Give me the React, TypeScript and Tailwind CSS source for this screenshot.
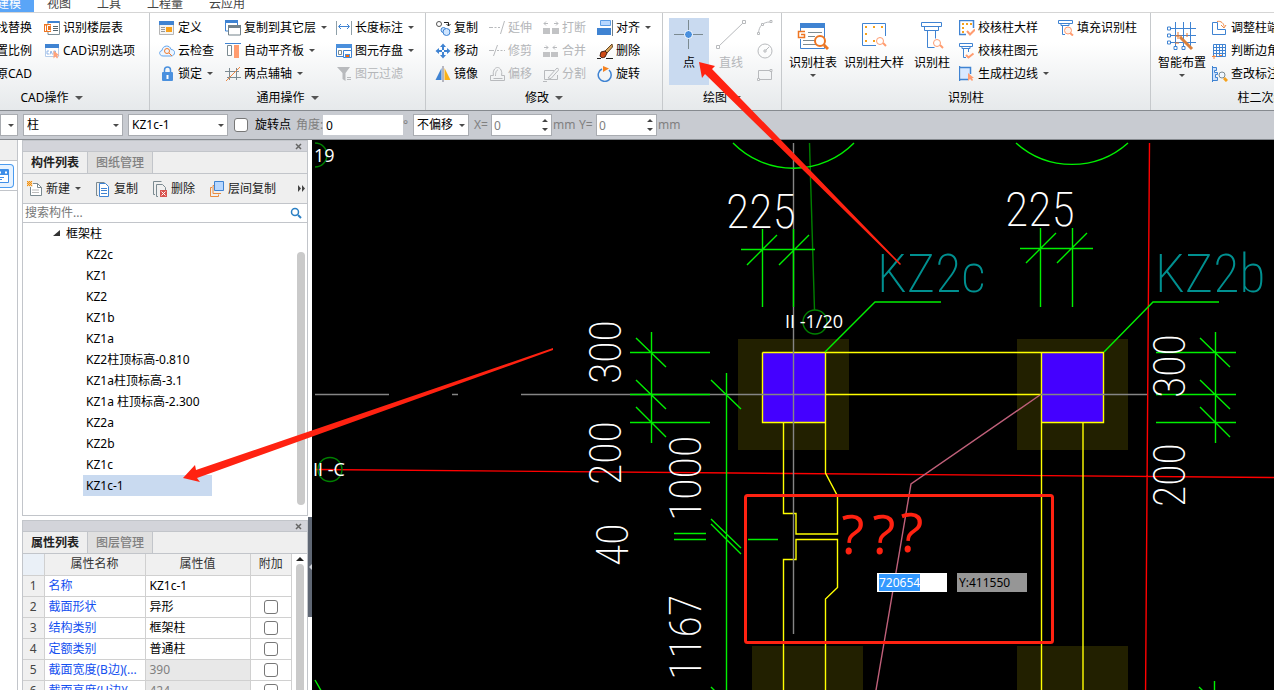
import { useEffect, useRef, type ReactNode } from "react";

function Icon({ children, size = 16, dim }: { children: ReactNode; size?: number; dim?: boolean }) {
    return (
        <svg
            aria-hidden="true"
            width={size}
            height={size}
            viewBox={`0 0 ${size} ${size}`}
            fill="none"
            stroke={dim ? "#b8babd" : "#3f83d2"}
            className="shrink-0"
        >
            {children}
        </svg>
    );
}

function Caret() {
    return <span className="block h-0 w-0 shrink-0 border-x-3 border-t-3 border-x-transparent border-t-[#4a4a4a]" />;
}

const icons: Record<string, ReactNode> = {
    floorTable: (
        <Icon>
            <path d="M4 1.500h11.500v13H4z" fill="#fff" stroke="#7f9097" />
            <path d="M3.500 1h12v2h-12z" fill="#3f83d2" stroke="none" />
            <path d="M9 6.500h5M9 8.500h5M9 10.500h5" stroke="#55666e" />
            <path d="M0 4h7v8H0z" fill="#ee7623" stroke="none" />
            <path d="M1.500 5.500V11M6.500 5.500h-3v5h3" stroke="#fff" />
        </Icon>
    ),
    cadOptions: (
        <Icon>
            <path d="M1.500 2.500h13v11h-13z" fill="#fff" stroke="#b7cdea" />
            <path d="M1 1h14v4H1z" fill="#3f83d2" stroke="none" />
            <path d="M5 8H3v3h2M6 11.500L7 8l1.500 3.500M10 8v3.500h1.500V8z" stroke="#8fb5e8" />
            <path d="M9.500 7.500v8l2-2 1.500 2 1-1-1-2h2.500z" fill="#ffa27a" stroke="none" />
        </Icon>
    ),
    define: (
        <Icon>
            <path d="M.5 2.500h14v12H.5z" fill="#f4f4f4" stroke="#b5b5b5" />
            <path d="M0 1h15v4H0z" fill="#3f83d2" stroke="none" />
            <path d="M2 7.500h4M2 9.500h4M2 11.500h4" stroke="#999" />
            <path d="M7 7h6v5H7z" fill="#f7a11b" stroke="none" />
        </Icon>
    ),
    cloud: (
        <Icon>
            <path d="M4 13C0 13-.5 8 3 7.500 3.500 2 11 1.500 12 6.500c5 0 4.500 6.500 0 6.500H4z" fill="#eef6ff" stroke="#62a4ec" />
            <circle cx="8" cy="8" r="2.500" stroke="#f07a2d" />
            <path d="M10 10l3 3" stroke="#f07a2d" />
        </Icon>
    ),
    lock: (
        <Icon>
            <path d="M5.500 6V4a3 3 0 0 1 6 0v2" stroke="#4a90de" strokeWidth="1.500" />
            <rect x="3" y="6" width="11" height="9" rx="1" fill="#4a90de" stroke="none" />
            <path d="M8.500 9v4" stroke="#fff" strokeWidth="2" />
        </Icon>
    ),
    copyLayer: (
        <Icon>
            <path d="M.5 1h12v10H.5z" fill="#fff" stroke="#3f83d2" />
            <path d="M0 0h13v3H0z" fill="#3f83d2" stroke="none" />
            <path d="M3.500 6h12v9h-12z" fill="#fff" stroke="#73828a" />
            <path d="M3 5h13v3H3z" fill="#73828a" stroke="none" />
        </Icon>
    ),
    slab: (
        <Icon>
            <path d="M0 .5h16" />
            <path d="M2.500 2.500h4v10h-4z" fill="#fff" stroke="#7b8a91" />
            <path d="M9 2h5v13H9z" fill="#ff9c70" stroke="none" />
        </Icon>
    ),
    auxAxis: (
        <Icon>
            <path d="M4.500 2v12M11.500 2v12M0 5.500h14M2 11.500h14" stroke="#7b8a91" />
            <path d="M1 15L15 1" stroke="#ee8844" />
        </Icon>
    ),
    dimension: (
        <Icon>
            <path d="M.5 1v14M15.500 1v14" stroke="#8fa0a8" />
            <path d="M3 6.500h10M5 4L2.500 6.500 5 9M11 4l2.500 2.500L11 9" />
        </Icon>
    ),
    save: (
        <Icon>
            <path d="M.5 1.500h15v12H.5z" fill="#fff" />
            <path d="M0 1h16v4H0z" fill="#4a8fdc" stroke="none" />
            <path d="M2.500 7.500h3v4h-3z" stroke="#7b8a91" />
            <path d="M7.500 7.500h8v7h-8z" fill="#fff" />
            <path d="M9 11h5v4H9z" fill="#4a8fdc" stroke="none" />
            <path d="M10 12h3v2h-3z" fill="#f60" stroke="none" />
        </Icon>
    ),
    filter: (
        <Icon dim>
            <path d="M1 1h13L9.500 7v8l-3-2V7z" fill="#b8babd" stroke="none" />
            <path d="M11 11.500h4M11 13.500h4" />
        </Icon>
    ),
    copy: (
        <Icon>
            <circle cx="4" cy="4" r="2.500" stroke="#555" />
            <path d="M9 2.500h4.500V6M11.500 4l2 2 2-2" stroke="#222" />
            <circle cx="8.500" cy="10" r="2.500" fill="#cfe5ff" />
            <circle cx="11.500" cy="12" r="3.500" fill="#cfe5ff" />
        </Icon>
    ),
    move: (
        <Icon>
            <path d="M8 3v4M8 9v4M3 8h4M9 8h4" strokeWidth="2" />
            <path d="M5 4l3-3.500L11 4zM5 12l3 3.500 3-3.500zM4 5L.5 8 4 11zM12 5l3.500 3L12 11z" fill="#3f83d2" stroke="none" />
        </Icon>
    ),
    mirror: (
        <Icon>
            <path d="M6.500 2v12H.5z" fill="#3f83d2" stroke="none" />
            <path d="M9.500 2v12h6z" fill="#fbb116" stroke="none" />
            <path d="M8 0v16" stroke="#778" />
        </Icon>
    ),
    extend: (
        <Icon dim>
            <path d="M0 7.500h4M5.500 7.500h2M9 7.500h2M11.500 14l4-13" />
        </Icon>
    ),
    trim: (
        <Icon dim>
            <path d="M0 7.500h5M8 7.500h2M11.500 7.500h2M15 7.500h1M4.500 13l4-11" />
        </Icon>
    ),
    offset: (
        <Icon dim>
            <path d="M1.500 14.500v-5h3c-1-4 1-8 4-8s5 4 4 8h3v5z" />
            <path d="M4.500 12.500h9M6.500 10c0-4 1-6 2.500-6" />
        </Icon>
    ),
    breakIcon: (
        <Icon dim>
            <path d="M0 8h7v6H0zM9 8h7v6H9z" fill="#c2c3c5" stroke="none" />
            <path d="M1 3.500h4M3 1.500l-2 2 2 2M11 3.500h4M13 1.500l2 2-2 2" />
        </Icon>
    ),
    merge: (
        <Icon dim>
            <path d="M0 9h7v5H0zM8 9h7v5H8z" fill="#c2c3c5" stroke="none" />
            <path d="M1 4.500h4M3 2.500l2 2-2 2M10 4.500h4M12 2.500l-2 2 2 2" />
        </Icon>
    ),
    split: (
        <Icon dim>
            <path d="M11 4.500H1.500v9h13V9M0 15.500h4M5 12l9-10 2 1.500-8 9z" />
        </Icon>
    ),
    align: (
        <Icon>
            <path d="M3.500.5h10v5h-10z" fill="#b7d7ff" stroke="#5c9de6" />
            <path d="M0 8h14v7H0z" fill="#3f83d2" stroke="none" />
            <path d="M15.500 0v16" stroke="#70808a" />
        </Icon>
    ),
    erase: (
        <Icon>
            <path d="M15 1L8 8l2 2 5.500-6z" fill="#d9a55c" stroke="#654521" />
            <path d="M4 9l4-1 2 2-2 4c-2 1-4 1-5-1z" fill="#cf4b17" stroke="#472314" />
            <path d="M0 15.500h4M9 15.500h7" stroke="#222" />
        </Icon>
    ),
    rotate: (
        <Icon>
            <path d="M5 3a6.500 6.500 0 1 0 7 1" strokeWidth="1.500" />
            <path d="M6 0l6 2.500L6 6z" fill="#f58220" stroke="none" />
        </Icon>
    ),
    checkDetail: (
        <Icon>
            <path d="M7 14.500H.5V.5h14V8" strokeWidth="1.500" />
            <path d="M3 3h2v2H3zM7 3h2v2H7zM11 3h2v2h-2zM3 7h2v2H3zM3 11h2v2H3z" fill="#f5a11b" stroke="none" />
            <path d="M8 11l3 3.500 5-5" stroke="#ff9c70" strokeWidth="2" />
        </Icon>
    ),
    checkColumn: (
        <Icon>
            <path d="M.5.500h13v3H.5zM3 3.500v2h8v-2M4.500 5.500v9H7M9.500 5.500V9" />
            <path d="M7 12l2.500 2.500 5-4" stroke="#ff9c70" strokeWidth="2" />
        </Icon>
    ),
    edgeLine: (
        <Icon>
            <path d="M2 2h9v11H2z" fill="#d8e8ff" stroke="none" />
            <path d="M.5 0v15M0 1.500h11.500V8M0 13.500h9" strokeWidth="1.500" />
            <path d="M9 7v8l2-2 2 2 1-1-1-2h2z" fill="#ff9c70" stroke="none" />
        </Icon>
    ),
    fillColumn: (
        <Icon>
            <path d="M.5.500h14v3H.5zM3 3.500v2h8v-2M4.500 5.500v9H7" />
            <circle cx="10" cy="10.500" r="3.500" fill="#fff3ec" stroke="#ff9c70" />
            <path d="M12 13l3 2.500" stroke="#ff9c70" strokeWidth="2" />
        </Icon>
    ),
    adjustEnd: (
        <Icon>
            <path d="M.5 2.500h5v7h8v5H.5z" />
            <path d="M5 1.500c4-1 7 2 7 5M9 5l3 3 2-3" stroke="#ee8844" />
        </Icon>
    ),
    judge: (
        <Icon>
            <path d="M1.500 1.500h12v12h-12zM1.500 4.500h12M1.500 7.500h12M1.500 10.500h12M4.500 1.500v12M7.500 1.500v12M10.500 1.500v12" />
            <path d="M0 13.500h4M2 12v4M7 12.500h3" stroke="#ee8844" />
        </Icon>
    ),
    checkMark: (
        <Icon>
            <path d="M.5 0v16M.5 1.500h4v3h-2v2h3v2h-2v3h2v3h-5" fill="#cce0fb" />
            <circle cx="10" cy="9" r="3" fill="#eef6ff" stroke="#7b8a91" />
            <path d="M12 12l3 3" stroke="#f5a11b" strokeWidth="3" />
        </Icon>
    ),
    arc: (
        <Icon dim>
            <path d="M1.500 13C2 6 6 2 13 2" />
            <path d="M.5 12.500h2v2h-2zM4.500 3.500h2v2h-2zM13 .5h2v2h-2z" fill="#fff" />
        </Icon>
    ),
    circle: (
        <Icon dim>
            <circle cx="8" cy="8" r="7" />
            <path d="M7 7h2v2H7zM9 7l3-3" />
        </Icon>
    ),
    rect: (
        <Icon dim>
            <path d="M1.500 4.500h13v9h-13z" />
            <path d="M.5 12.500h2v2h-2zM13 3.500h2v2h-2z" fill="#fff" />
        </Icon>
    ),
    newFile: (
        <Icon>
            <path d="M3.500 2.500h7l4 4v8h-11z" fill="#fff" stroke="#7b8a91" />
            <path d="M10.500 2.500v4h4" stroke="#7b8a91" />
            <path d="M5 9h7M5 11.500h7" stroke="#bbb" />
            <path d="M0 0h6v6H0z" fill="#efefef" stroke="none" />
            <path d="M0 0h1v1H0zM2 0h1v1H2zM4 0h1v1H4zM1 1h1v1H1zM3 1h1v1H3zM0 2h1v1H0zM2 2h1v1H2zM4 2h1v1H4zM1 3h1v1H1zM3 3h1v1H3zM0 4h1v1H0zM2 4h1v1H2zM4 4h1v1H4z" fill="#f08c00" stroke="#f79a1d" strokeWidth=".3" />
        </Icon>
    ),
    copyDoc: (
        <Icon>
            <path d="M3 14.500H1.500v-13h8" stroke="#7b8a91" />
            <path d="M4.500 2.500h6l3 3v10h-9z" fill="#fff" />
            <path d="M6 7.500h6M6 9.500h6M6 12.500h6" />
        </Icon>
    ),
    deleteDoc: (
        <Icon>
            <path d="M3 13.500H1.500v-13h8M6 15.500H4.500v-12h6l3 3V9" stroke="#7b8a91" />
            <path d="M8 9h7v7H8z" fill="#d9534f" stroke="none" />
            <path d="M9.500 10.500l4 4M13.500 10.500l-4 4" stroke="#fff" />
        </Icon>
    ),
    layerCopy: (
        <Icon>
            <path d="M3 6.500H1.500v9h8v-2M5 4.500h-1v8h8" stroke="#e98b3f" />
            <path d="M5.500.5h9v9h-9z" fill="#b7d7ff" />
        </Icon>
    ),
};

function Tool({ icon, label, caret, disabled }: { icon: string; label: string; caret?: boolean; disabled?: boolean }) {
    return (
        <button type="button" disabled={disabled} className="flex items-center gap-[3px] whitespace-nowrap disabled:text-[#b4b6b9]">
            {icons[icon]}
            <span>{label}</span>
            {caret && <span className="ml-[2px]"><Caret /></span>}
        </button>
    );
}

function Group({ title, caret, className, children }: { title: string; caret?: boolean; className: string; children: ReactNode }) {
    return (
        <section className={`flex shrink-0 flex-col border-r border-[#c6c9cc] pt-[3px] ${className}`}>
            <div className="flex h-[69px]">{children}</div>
            <h2 className="flex flex-1 items-center justify-center gap-[6px] pt-px whitespace-nowrap">
                {title}
                {caret && <span className="block h-0 w-0 border-x-4 border-t-4 border-x-transparent border-t-[#555]" />}
            </h2>
        </section>
    );
}

function BigTool({ label, caret, className, children }: { label: string; caret?: boolean; className: string; children: ReactNode }) {
    return (
        <button type="button" className={`flex h-[67px] shrink-0 flex-col items-center whitespace-nowrap ${className}`}>
            <svg aria-hidden="true" width="32" height="36" viewBox="0 0 32 36" fill="none" stroke="#3f83d2" className="shrink-0">
                {children}
            </svg>
            <span className="leading-[18px]">{label}</span>
            {caret && <span className="mt-[2px]"><Caret /></span>}
        </button>
    );
}

function Ribbon() {
    const column = "grid shrink-0 grid-rows-3";
    return (
        <div className="flex h-[98px] overflow-hidden border-b border-[#868a8f] bg-gradient-to-b from-white from-30% to-[#e6e9eb]">
            <Group title="CAD操作" caret className="-ml-[46px] w-[196px]">
                <div className={`${column} w-[78px] justify-end`}>
                    <button type="button" className="whitespace-nowrap">查找替换</button>
                    <button type="button" className="whitespace-nowrap">设置比例</button>
                    <button type="button" className="whitespace-nowrap">还原CAD</button>
                </div>
                <div className={`${column} pl-3`}>
                    <Tool icon="floorTable" label="识别楼层表" />
                    <Tool icon="cadOptions" label="CAD识别选项" />
                </div>
            </Group>
            <Group title="通用操作" caret className="w-[276px]">
                <div className={`${column} w-[75px] pl-[9px]`}>
                    <Tool icon="define" label="定义" />
                    <Tool icon="cloud" label="云检查" />
                    <Tool icon="lock" label="锁定" caret />
                </div>
                <div className={`${column} w-[111px]`}>
                    <Tool icon="copyLayer" label="复制到其它层" caret />
                    <Tool icon="slab" label="自动平齐板" caret />
                    <Tool icon="auxAxis" label="两点辅轴" caret />
                </div>
                <div className={column}>
                    <Tool icon="dimension" label="长度标注" caret />
                    <Tool icon="save" label="图元存盘" caret />
                    <Tool icon="filter" label="图元过滤" disabled />
                </div>
            </Group>
            <Group title="修改" caret className="w-[237px]">
                <div className={`${column} w-[63px] pl-[9px]`}>
                    <Tool icon="copy" label="复制" />
                    <Tool icon="move" label="移动" />
                    <Tool icon="mirror" label="镜像" />
                </div>
                <div className={`${column} w-[54px]`}>
                    <Tool icon="extend" label="延伸" disabled />
                    <Tool icon="trim" label="修剪" disabled />
                    <Tool icon="offset" label="偏移" disabled />
                </div>
                <div className={`${column} w-[54px]`}>
                    <Tool icon="breakIcon" label="打断" disabled />
                    <Tool icon="merge" label="合并" disabled />
                    <Tool icon="split" label="分割" disabled />
                </div>
                <div className={column}>
                    <Tool icon="align" label="对齐" caret />
                    <Tool icon="erase" label="删除" />
                    <Tool icon="rotate" label="旋转" />
                </div>
            </Group>
            <Group title="绘图" caret className="w-[119px]">
                <BigTool label="点" className="ml-[6px] mt-[2px] w-10 bg-[#c9daf0]">
                    <path d="M15.500 2v10M15.500 21v10M1 16.500h10M20 16.500h10" stroke="#7b8a91" />
                    <circle cx="15.500" cy="16.500" r="4" fill="#4a90de" stroke="#fff" />
                </BigTool>
                <BigTool label="直线" className="mt-[2px] w-11 text-[#b4b6b9]">
                    <path d="M4 28L28 5" stroke="#b8babd" />
                    <path d="M1.500 27.500h3v3h-3zM27.500 2.500h3v3h-3z" fill="#fff" stroke="#b8babd" />
                </BigTool>
                <div className={`${column} w-5 justify-items-end`}>
                    <button type="button" aria-label="弧">{icons.arc}</button>
                    <button type="button" aria-label="圆">{icons.circle}</button>
                    <button type="button" aria-label="矩形">{icons.rect}</button>
                </div>
            </Group>
            <Group title="识别柱" className="w-[369px]">
                <BigTool label="识别柱表" caret className="ml-1 mt-[2px] w-[54px]">
                    <path d="M3.500 6.500h24v24h-24z" fill="#fff" />
                    <path d="M3 5h25v5H3z" fill="#3f83d2" stroke="none" />
                    <path d="M11 14.500h14M11 18.500h7M6 22.500h12M6 26.500h13" stroke="#7b8a91" />
                    <path d="M1 13h8v8H1z" fill="#fff" stroke="none" />
                    <path d="M8 13.500H1.500v6h6v-3H4" stroke="#ee7623" strokeWidth="1.500" />
                    <circle cx="23" cy="23" r="5" fill="#fff" stroke="#ee7623" strokeWidth="2" />
                    <path d="M27 27l4 4" stroke="#ee7623" strokeWidth="3" />
                </BigTool>
                <BigTool label="识别柱大样" className="mt-[2px] w-[68px]">
                    <path d="M18 27.500H4.500v-22h23V18" />
                    <path d="M7 8h2v2H7zM15 8h2v2h-2zM23 8h2v2h-2zM7 15h2v2H7zM7 22h2v2H7zM15 22h2v2h-2z" fill="#f5a11b" stroke="none" />
                    <circle cx="22" cy="23" r="3.500" stroke="#ff9c70" />
                    <path d="M25 25l3 3" stroke="#ff9c70" strokeWidth="2" />
                </BigTool>
                <BigTool label="识别柱" className="mt-[2px] w-12">
                    <path d="M5.500 4.500h20v4h-20zM8.500 8.500v4h14v-4M11.500 12.500v17h7M19.500 12.500v8" />
                    <circle cx="21" cy="25" r="3.500" stroke="#ff9c70" />
                    <path d="M24 27l3 3" stroke="#ff9c70" strokeWidth="2" />
                </BigTool>
                <div className={`${column} w-[99px] pl-[3px]`}>
                    <Tool icon="checkDetail" label="校核柱大样" />
                    <Tool icon="checkColumn" label="校核柱图元" />
                    <Tool icon="edgeLine" label="生成柱边线" caret />
                </div>
                <div className={`${column} pl-[3px]`}>
                    <Tool icon="fillColumn" label="填充识别柱" />
                </div>
            </Group>
            <Group title="柱二次编辑" className="w-[234px]">
                <BigTool label="智能布置" caret className="ml-1 mt-[2px] w-[54px]">
                    <path d="M9.500 4v24M17.500 4v26M24.500 4v24M3 10.500h27M3 17.500h27M3 24.500h27" />
                    <path d="M1.500 9h3v3h-3zM1.500 16h3v3h-3zM1.500 23h3v3h-3zM8 28.500h3v3H8zM16 28.500h3v3h-3z" fill="#fff" />
                    <path d="M14 19l12 12" stroke="#d9803c" strokeWidth="3" />
                    <path d="M12 14v7M9 18h7M21 15v4M9 25h4" stroke="#ee7623" />
                </BigTool>
                <div className={`${column} pl-[3px]`}>
                    <Tool icon="adjustEnd" label="调整柱端头" />
                    <Tool icon="judge" label="判断边角柱" />
                    <Tool icon="checkMark" label="查改标注" />
                </div>
            </Group>
        </div>
    );
}

function Select({ label, value, className }: { label: string; value: string; className: string }) {
    return (
        <div className={`relative shrink-0 ${className}`}>
            <select aria-label={label} className="h-[22px] w-full appearance-none border border-[#a9acb1] bg-white pl-[3px]">
                <option>{value}</option>
            </select>
            <span className="pointer-events-none absolute right-1 top-[10px]"><Caret /></span>
        </div>
    );
}

function Spinner({ id }: { id: string }) {
    return (
        <div className="relative w-[61px] shrink-0">
            <input id={id} defaultValue="0" className="h-[22px] w-full border border-[#a9acb1] bg-white pl-[2px] text-[#808080]" />
            <svg aria-hidden="true" className="absolute right-[3px] top-1" width="7" height="14" fill="#444">
                <path d="M0 4l3-3 3 3zM0 10l3 3 3-3z" />
            </svg>
        </div>
    );
}

function OptionsBar() {
    return (
        <div className="flex h-[29px] items-center overflow-hidden border-b border-[#868a8f] bg-[#c8cbd1] whitespace-nowrap">
            <Select label="楼层" value="" className="w-[18px]" />
            <Select label="构件类型" value="柱" className="ml-[5px] w-[100px]" />
            <Select label="构件" value="KZ1c-1" className="ml-[5px] w-[100px]" />
            <label className="ml-[6px] flex items-center gap-[7px]">
                <input type="checkbox" className="h-[14px] w-[14px] appearance-none rounded-[3px] border border-[#777] bg-white" />
                旋转点
            </label>
            <label htmlFor="angle" className="ml-[5px] w-[27px] text-[#808080]">角度:</label>
            <input id="angle" defaultValue="0" className="h-5 w-20 shrink-0 bg-white pl-[3px]" />
            <span className="w-[10px] text-[#808080]">°</span>
            <Select label="偏移方式" value="不偏移" className="w-[56px]" />
            <label htmlFor="offset-x" className="ml-[5px] w-[17px] text-[#808080]">X=</label>
            <Spinner id="offset-x" />
            <span className="ml-[1px] w-[26px] text-[#808080]">mm</span>
            <label htmlFor="offset-y" className="w-[17px] text-[#808080]">Y=</label>
            <Spinner id="offset-y" />
            <span className="ml-[1px] text-[#808080]">mm</span>
        </div>
    );
}

function PanelHead({ active, other }: { active: string; other: string }) {
    return (
        <>
            <div className="flex h-[11px] shrink-0 items-center justify-end border-b border-[#c2c5ca] bg-[#d3d4da] pr-[5px]">
                <button type="button" aria-label="关闭">
                    <svg width="7" height="7" stroke="#666" strokeWidth="1.500"><path d="M1 1l5 5M6 1L1 6" /></svg>
                </button>
            </div>
            <div role="tablist" className="flex h-[22px] shrink-0 border-b border-[#c2c5ca] bg-[#efefef]">
                <button role="tab" aria-selected="true" className="w-[65px] border-r border-[#c2c5ca] font-bold text-[#222]">{active}</button>
                <button role="tab" aria-selected="false" className="w-[65px] border-r border-[#c2c5ca] bg-[#e0e0e0] font-medium text-[#808080]">{other}</button>
            </div>
        </>
    );
}

const columns = ["KZ2c", "KZ1", "KZ2", "KZ1b", "KZ1a", "KZ2柱顶标高-0.810", "KZ1a柱顶标高-3.1", "KZ1a 柱顶标高-2.300", "KZ2a", "KZ2b", "KZ1c", "KZ1c-1"];

function ComponentPanel() {
    return (
        <section className="flex h-[376px] shrink-0 flex-col border border-[#c2c5ca] bg-white">
            <PanelHead active="构件列表" other="图纸管理" />
            <div className="flex h-[30px] shrink-0 items-center gap-[14px] border-b border-[#c2c5ca] bg-[#efefef] pl-1 text-[#222]">
                <Tool icon="newFile" label="新建" caret />
                <Tool icon="copyDoc" label="复制" />
                <Tool icon="deleteDoc" label="删除" />
                <Tool icon="layerCopy" label="层间复制" />
                <svg aria-hidden="true" className="ml-auto mr-[1px] shrink-0" width="8" height="7" fill="#444"><path d="M0 0l3 3.500L0 7zM4 0l3 3.500L4 7z" /></svg>
            </div>
            <div className="flex h-[19px] shrink-0 items-center border-b border-[#c2c5ca] pr-[5px]">
                <input aria-label="搜索构件" placeholder="搜索构件..." className="min-w-0 flex-1 pl-[2px] outline-none placeholder:text-[#777]" />
                <svg aria-hidden="true" width="12" height="12" fill="none" stroke="#2a7fc4" strokeWidth="1.500">
                    <circle cx="5" cy="5" r="3.500" />
                    <path d="M8 8l3 3" strokeWidth="2" />
                </svg>
            </div>
            <div className="flex min-h-0 flex-1 justify-between">
                <ul>
                    <li>
                        <div className="flex h-[21px] items-center gap-[6px] pl-[30px]">
                            <svg aria-hidden="true" width="7" height="7" fill="#333"><path d="M7 0v6H0z" /></svg>
                            框架柱
                        </div>
                        <ul className="pl-[60px]">
                            {columns.map((name) => (
                                <li key={name} className={`flex h-[21px] w-[129px] items-center whitespace-nowrap pl-[3px] ${name === "KZ1c-1" ? "bg-[#c9daf0]" : ""}`}>
                                    {name}
                                </li>
                            ))}
                        </ul>
                    </li>
                </ul>
                <div className="mb-[10px] mr-[2px] mt-[29px] w-2 rounded-full bg-[#cacaca]" />
            </div>
        </section>
    );
}

const properties = [
    { name: "名称", value: "KZ1c-1" },
    { name: "截面形状", value: "异形", extra: true },
    { name: "结构类别", value: "框架柱", extra: true },
    { name: "定额类别", value: "普通柱", extra: true },
    { name: "截面宽度(B边)(...", value: "390", extra: true, locked: true },
    { name: "截面高度(H边)(...", value: "424", extra: true, locked: true },
];

function PropertyPanel() {
    return (
        <section className="flex min-h-0 flex-1 flex-col overflow-hidden border border-b-0 border-[#c2c5ca] bg-white">
            <PanelHead active="属性列表" other="图层管理" />
            <div className="flex">
                <table className="w-[269px] table-fixed border-collapse">
                    <thead>
                        <tr className="h-[21px] bg-[#f0f0f0] text-[#333] *:border-b *:border-r *:border-[#d0d0d0] *:p-0 *:font-normal">
                            <th className="w-[21px] bg-[#eaf0f7]" />
                            <th className="w-[101px]">属性名称</th>
                            <th className="w-[105px]">属性值</th>
                            <th>附加</th>
                        </tr>
                    </thead>
                    <tbody>
                        {properties.map((row, i) => (
                            <tr key={row.name} className="h-[21px] leading-5 *:border-b *:border-r *:border-[#d0d0d0] *:py-0">
                                <td className="bg-[#f0f0f0] text-center text-[#444]">{i + 1}</td>
                                <td className="overflow-hidden whitespace-nowrap pl-1 text-[#1450f0]">{row.name}</td>
                                <td className={row.locked ? "bg-[#e8e8e8] pl-1 text-[#808080]" : "pl-1"}>{row.value}</td>
                                <td className="pb-[2px] text-center">
                                    {row.extra && (
                                        <input type="checkbox" aria-label={row.name} className="mx-auto block h-[14px] w-[14px] appearance-none rounded-[3px] border border-[#777] bg-white" />
                                    )}
                                </td>
                            </tr>
                        ))}
                    </tbody>
                </table>
                <div className="flex flex-1 flex-col items-center pt-[3px]">
                    <svg aria-hidden="true" width="8" height="4" fill="#222"><path d="M0 4l4-4 4 4z" /></svg>
                    <div className="mt-[3px] w-2 flex-1 rounded-t-full bg-[#cacaca]" />
                </div>
            </div>
        </section>
    );
}

// Vertical dimension values read from bottom to top.
function VText({ x, y, children }: { x: number; y: number; children: string }) {
    return (
        <text transform={`translate(${x} ${y}) rotate(-90)`} fontSize="44">
            {children}
        </text>
    );
}

const narrow = "font-['Roboto_Condensed',Lato,sans-serif] font-extralight";

function Drawing() {
    return (
        <svg role="img" aria-label="柱平面图" className="absolute left-0 top-0 h-full w-full" fill="none">
            <g transform="translate(-312 -140)" strokeWidth="1.4">
                <g fill="#222000">
                    <path d="M738 339h111v111H738zM1017 339h111v111h-111zM752 646h111v60H752zM1017 646h111v60h-111z" />
                </g>
                <g fill="#4400ff">
                    <path d="M763 353h62v69h-62zM1042 353h62v69h-62z" />
                </g>
                <g stroke="#ff0000">
                    <path d="M1149.500 143L1145.500 700M315 469.500L1274 477.500" />
                </g>
                <path d="M762.500 352.500h341v70h-62v-70M762.500 352.500v70h63v-70M825.500 394.500h215M783.500 422v91.500h12.500v20.500h41.500v-38L825.500 473v-51M783.500 700V559.500h12.500v-20h41.500v48L825.500 599v101M1041.500 422v280M1083 422v280" stroke="#ffff00" />
                <path d="M793.500 143v491M315 394.500h74M452 394.500h6M521 394.500h304M1041 394.500h106" stroke="#858585" />
                <g stroke="#008000">
                    <path d="M809.500 143L814.500 310" />
                    <circle cx="815" cy="322" r="12" />
                    <path d="M315 143a12 12 0 0 1 0 24" />
                    <circle cx="330" cy="469.500" r="12" />
                </g>
                <g stroke="#00f000">
                    <path d="M733 143a85 85 0 0 0 121 0M1016 143a84 84 0 0 0 112 0" />
                    <path d="M741 249.500h74M762.500 229v78M793.500 229v78M747 265l30-30M779 265l30-30" />
                    <path d="M1020 248.500h73M1040.500 228v79M1072.500 228v79M1026 263l30-30M1057 263l30-30" />
                    <path d="M825 352l50-50h66M1104 352l49-50h66" />
                    <path d="M651.500 332v111M630 352.500h80M630 394.500h80M630 422.500h80M636 338l30 29M636 380l30 29M636 407l30 30" />
                    <path d="M1215.500 332v111M1156 352.500h80M1156 394.500h80M1156 422.500h80M1200 338l30 29M1200 380l30 29M1200 407l30 30" />
                    <path d="M726.500 373v330M711 380l30 29M711 519l30 29M711 524l30 30M674 533.500h32M674 539.500h32M748 539.500h30M711 687l8 8M315 680l8 14M1214.500 681v15M1199 687l8 8" />
                </g>
                <path d="M1040 395L911 484 876 690" stroke="#c0607a" />
                <g fill="#fff" className={narrow}>
                    <g fontSize="48">
                        <text x="726" y="228">225</text>
                        <text x="1005" y="226">225</text>
                    </g>
                    <VText x={621} y={384}>300</VText>
                    <VText x={621} y={485}>200</VText>
                    <VText x={701} y={521}>1000</VText>
                    <VText x={628} y={566}>40</VText>
                    <VText x={701} y={680}>1167</VText>
                    <VText x={1185} y={398}>300</VText>
                    <VText x={1185} y={507}>200</VText>
                </g>
                <g fill="#009090" fontSize="54" className={narrow}>
                    <text x="877" y="292">KZ2c</text>
                    <text x="1155" y="292">KZ2b</text>
                </g>
                <g fill="#fff" fontSize="18" className="font-['Open_Sans',sans-serif]">
                    <text x="314" y="162">19</text>
                    <text x="785" y="328">II -1/20</text>
                    <text x="313" y="476">II -C</text>
                </g>
            </g>
        </svg>
    );
}

function Canvas() {
    const coordinate = useRef<HTMLInputElement>(null);

    useEffect(() => {
        coordinate.current?.focus();
        coordinate.current?.select();
    }, []);

    return (
        <main className="relative min-w-0 flex-1 overflow-hidden bg-black">
            <Drawing />
            <input ref={coordinate} aria-label="X" defaultValue="720654" className="absolute left-[565px] top-[433px] h-[19px] w-[70px] bg-white pl-[2px] outline-none selection:bg-[#3399ff] selection:text-white" />
            <input aria-label="Y" readOnly value="Y:411550" className="absolute left-[645px] top-[433px] h-[19px] w-[70px] bg-[#969696] pl-[2px] outline-none" />
        </main>
    );
}

function Annotations() {
    return (
        <svg aria-hidden="true" className="pointer-events-none absolute inset-0 h-full w-full" fill="#ff2211">
            <path d="M699 62l16 4-3 3 189 195-1 1L705 74l-3 4z" />
            <path d="M183 478l12-13 1 5 357-122v2L197 478l3 4z" />
            <rect x="745.500" y="495.500" width="307" height="147" rx="2" fill="none" stroke="#ff2211" strokeWidth="3" />
            <g fontSize="54" className="font-['Open_Sans',sans-serif]">
                <text transform="translate(839 553) rotate(4)">?</text>
                <text transform="translate(870 553) rotate(4)">?</text>
                <text transform="translate(898 551) rotate(4)">?</text>
            </g>
        </svg>
    );
}

export default function App() {
    return (
        <div className="relative flex h-screen flex-col overflow-hidden bg-white font-['Noto_Sans','Noto_Sans_CJK_SC',sans-serif] text-[12px] leading-4 text-black">
            <nav className="flex h-[13px] shrink-0 items-end overflow-hidden border-b border-[#d5d5d5] text-[#444]">
                <a href="#model" className="flex w-[34px] shrink-0 justify-end bg-[#5aa5f7] pr-[13px] whitespace-nowrap text-white">建模</a>
                <a href="#view" className="ml-[13px]">视图</a>
                <a href="#tools" className="ml-[26px]">工具</a>
                <a href="#quantity" className="ml-[26px]">工程量</a>
                <a href="#cloud" className="ml-[26px]">云应用</a>
            </nav>
            <Ribbon />
            <OptionsBar />
            <div className="flex min-h-0 flex-1">
                <aside className="w-[18px] shrink-0 border-r border-[#c2c5ca]">
                    <div className="h-[21px] border-b border-[#c2c5ca] bg-[#efefef]" />
                    <div className="h-[30px] overflow-hidden border-b border-[#c2c5ca] pt-[3px]">
                        <button type="button" aria-label="构件" className="flex h-6 w-[14px] items-center justify-end rounded-r border border-l-0 border-[#4a9bf0] bg-[#e6f2ff] pr-1">
                            <svg width="11" height="14" fill="none" stroke="#3f8fe8">
                                <path d="M0 .5h8.500v13H0" fill="#fff" />
                                <path d="M0 1h9v5H0z" fill="#3f8fe8" stroke="none" />
                                <path d="M0 3.500h1M5 3.500h2" stroke="#fff" strokeWidth="2" />
                                <path d="M0 8.500h4M0 10.500h2" />
                            </svg>
                        </button>
                    </div>
                </aside>
                <div className="ml-1 flex w-[286px] shrink-0 flex-col gap-1">
                    <ComponentPanel />
                    <PropertyPanel />
                </div>
                <div className="flex w-1 shrink-0 flex-col pt-[377px]">
                    <button type="button" aria-label="收起" className="h-[100px] bg-[#5f6774]">
                        <svg width="4" height="6" fill="#cfd3da"><path d="M4 0v6L1 3z" /></svg>
                    </button>
                </div>
                <Canvas />
            </div>
            <Annotations />
        </div>
    );
}
